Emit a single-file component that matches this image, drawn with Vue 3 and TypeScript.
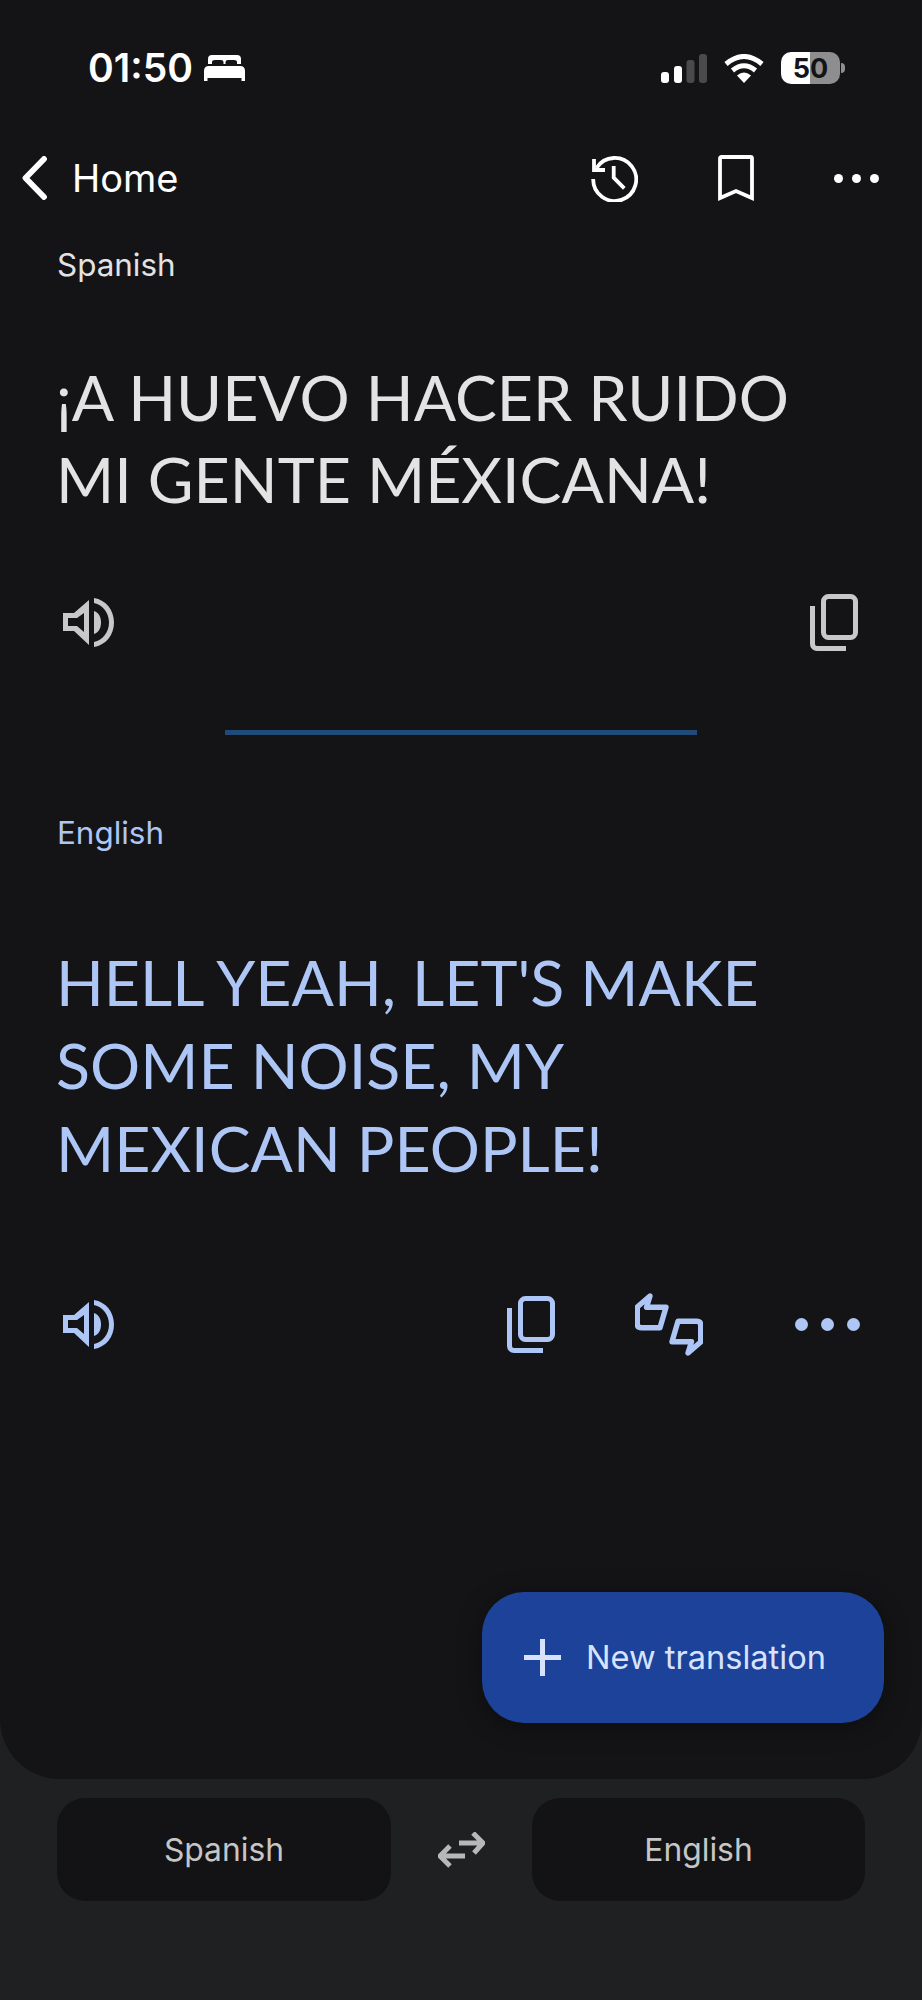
<script setup lang="ts">
const sourceLines: string[] = ['¡A HUEVO HACER RUIDO', 'MI GENTE MÉXICANA!']
const targetLines: string[] = ["HELL YEAH, LET'S MAKE", 'SOME NOISE, MY', 'MEXICAN PEOPLE!']
const signalBars = [
  { x: 0, y: 18, h: 11, fill: '#ffffff' },
  { x: 13, y: 12, h: 17, fill: '#ffffff' },
  { x: 25.5, y: 6, h: 23, fill: '#4a4a4c' },
  { x: 38, y: 0, h: 29, fill: '#4a4a4c' },
]
</script>

<template>
  <div class="page">
    <main class="panel">
      <div class="status">
        <div class="status-left">
          <span class="time">01:50</span>
          <svg class="bed" viewBox="0 0 41 28" width="41" height="28" fill="#fff">
            <path d="M4 10V5Q4 1 8 1H33Q37 1 37 5V10H33V8Q33 6 30 6H24Q21.5 6 21.5 8V10H19.5V8Q19.5 6 17 6H11Q8 6 8 8V10Z" />
            <path d="M0 17Q0 12 5 12H36Q41 12 41 17V27H37.500V24H3.500V27H0Z" />
          </svg>
        </div>
        <div class="status-right">
          <svg viewBox="0 0 46 29" width="46" height="29">
            <rect v-for="b in signalBars" :key="b.x" :x="b.x" :y="b.y" width="8" :height="b.h" rx="3" :fill="b.fill" />
          </svg>
          <svg viewBox="0 0 40 29" width="40" height="29" fill="none" stroke="#fff" stroke-width="5">
            <path d="M2 10Q20 -5 38 10" />
            <path d="M8.500 16.500Q20 7 31.500 16.500" />
            <path d="M20 29L13 21.500Q20 15.500 27 21.500Z" fill="#fff" stroke="none" />
          </svg>
          <div class="battery"><span>50</span></div>
        </div>
      </div>

      <nav class="nav">
        <div class="nav-left">
          <svg viewBox="0 0 25 44" width="25" height="44" fill="none" stroke="#fff" stroke-width="5.800" stroke-linecap="round" stroke-linejoin="round">
            <path d="M22 3L3.500 22L22 41" />
          </svg>
          <span class="home">Home</span>
        </div>
        <div class="nav-right">
          <svg viewBox="0 0 47 47" width="47" height="47" fill="none" stroke="#fff" stroke-width="3.800">
            <path d="M5.500 13A21.500 21.500 0 1 1 2.200 24" />
            <path d="M3 4V15H14" />
            <path d="M22.700 11V22.700L33.300 33.300" />
          </svg>
          <svg viewBox="0 0 36 46" width="36" height="46" fill="none" stroke="#fff" stroke-width="3.800">
            <path d="M2 43V3.500Q2 2 3.500 2H32.500Q34 2 34 3.500V43L18 36Z" />
          </svg>
          <svg class="nav-dots" viewBox="0 0 45 9" width="45" height="9" fill="#fff">
            <circle cx="4.500" cy="4.500" r="4.500" /><circle cx="22.500" cy="4.500" r="4.500" /><circle cx="40.500" cy="4.500" r="4.500" />
          </svg>
        </div>
      </nav>

      <section class="source">
        <div class="label">Spanish</div>
        <div class="text text-source">
          <div v-for="l in sourceLines" :key="l">{{ l }}</div>
        </div>
        <div class="actions actions-source">
          <svg class="icon-speaker" viewBox="0 0 51 51" width="51" height="51" fill="#c8c8c8">
            <path fill-rule="evenodd" d="M0 16H11L26 3V48L11 34H0ZM5 21V29H14L21 35V16L14 21Z" />
            <path d="M31 14C36 16 38 20 38 25.500C38 31 36 35 31 37Z" />
            <path d="M31 1C43 3 51 13 51 25.500C51 38 43 48 31 50V45C40 43 46 35 46 25.500C46 16 40 8 31 6Z" />
          </svg>
          <svg viewBox="0 0 48 57" width="48" height="57" fill="none" stroke="#c8c8c8" stroke-width="5">
            <rect x="13.500" y="2.500" width="32" height="41" rx="5" />
            <path d="M2.500 12V50A4.500 4.500 0 0 0 7 54.500H36" />
          </svg>
        </div>
      </section>

      <div class="divider"></div>

      <section class="target">
        <div class="label label-target">English</div>
        <div class="text text-target">
          <div v-for="l in targetLines" :key="l">{{ l }}</div>
        </div>
        <div class="actions actions-target">
          <svg class="icon-speaker" viewBox="0 0 51 51" width="51" height="51" fill="#aec6f6">
            <path fill-rule="evenodd" d="M0 16H11L26 3V48L11 34H0ZM5 21V29H14L21 35V16L14 21Z" />
            <path d="M31 14C36 16 38 20 38 25.500C38 31 36 35 31 37Z" />
            <path d="M31 1C43 3 51 13 51 25.500C51 38 43 48 31 50V45C40 43 46 35 46 25.500C46 16 40 8 31 6Z" />
          </svg>
          <div class="target-tools">
            <svg viewBox="0 0 48 57" width="48" height="57" fill="none" stroke="#aec6f6" stroke-width="5">
              <rect x="13.500" y="2.500" width="32" height="41" rx="5" />
              <path d="M2.500 12V50A4.500 4.500 0 0 0 7 54.500H36" />
            </svg>
            <svg viewBox="0 0 68 67" width="68" height="67" fill="none" stroke="#aec6f6" stroke-width="5.400" stroke-linejoin="round">
              <path d="M15 5L11.500 16.300H31L25 36.700H6.700Q2.300 36.700 2.300 33V16Z" />
              <path d="M15 5L11.500 16.300H31L25 36.700H6.700Q2.300 36.700 2.300 33V16Z" transform="rotate(180 34 33.500)" />
            </svg>
            <svg class="dots-blue" viewBox="0 0 65 13" width="65" height="13" fill="#aec6f6">
              <circle cx="6.500" cy="6.500" r="6.500" /><circle cx="32.500" cy="6.500" r="6.500" /><circle cx="58.500" cy="6.500" r="6.500" />
            </svg>
          </div>
        </div>
      </section>

      <button class="fab">
        <svg viewBox="0 0 37 37" width="37" height="37" fill="#d8e2ff">
          <rect x="16" y="0" width="5" height="37" /><rect x="0" y="16" width="37" height="5" />
        </svg>
        <span class="fab-label">New translation</span>
      </button>
    </main>

    <footer class="langs">
      <div class="pill">Spanish</div>
      <svg viewBox="0 0 47 36" width="47" height="36" fill="none" stroke="#b8b8b8" stroke-width="5">
        <path d="M21 11H45M35 1L45 11L36 21" />
        <path d="M27 24H2M12 14L2 24L12 34" />
      </svg>
      <div class="pill pill-right">English</div>
    </footer>
  </div>
</template>

<style scoped>
.page {
  width: 922px;
  height: 2000px;
  background: #1f2022;
  font-family: Inter, "Liberation Sans", sans-serif;
  overflow: hidden;
}
.panel {
  position: relative;
  height: 1779px;
  background: #141416;
  border-radius: 0 0 60px 60px;
  padding-top: 52px;
  box-sizing: border-box;
}
.status {
  display: flex;
  justify-content: space-between;
  align-items: center;
  height: 32px;
  padding: 0 77px 0 88px;
}
.status-left {
  display: flex;
  align-items: center;
  gap: 11px;
}
.time {
  color: #fff;
  font-size: 39px;
  font-weight: 600;
  line-height: 32px;
}
.status-right {
  display: flex;
  align-items: center;
  gap: 17px;
  margin-right: 5px;
}
.battery {
  position: relative;
  width: 59px;
  height: 32px;
  border-radius: 10px;
  background: linear-gradient(90deg, #fff 50%, #8e8e8e 50%);
  display: flex;
  align-items: center;
  justify-content: center;
  color: #141416;
  font-size: 27px;
  font-weight: 700;
}
.battery::after {
  content: "";
  position: absolute;
  left: 60px;
  top: 11px;
  width: 4px;
  height: 10px;
  border-radius: 0 4px 4px 0;
  background: #8e8e8e;
}
.nav {
  display: flex;
  justify-content: space-between;
  align-items: center;
  height: 48px;
  margin-top: 70px;
  padding: 0 44px 0 22px;
}
.nav-left {
  display: flex;
  align-items: center;
  gap: 25px;
}
.home {
  color: #fff;
  font-size: 38px;
  line-height: 48px;
}
.nav-right {
  display: flex;
  align-items: center;
  gap: 80px;
}
.nav-dots {
  margin-right: -1px;
}
.source {
  padding-top: 43px;
}
.label {
  padding-left: 57px;
  color: #e3e3e3;
  font-size: 31.400px;
  line-height: 40px;
}
.label-target {
  color: #aec6f6;
}
.text {
  padding-left: 56px;
  font-family: Lato, Inter, sans-serif;
  font-size: 62.700px;
  line-height: 82px;
}
.text-source {
  margin-top: 71px;
  color: #e3e3e3;
}
.text-target {
  margin-top: 87px;
  color: #aec6f6;
  line-height: 83px;
}
.actions {
  display: flex;
  justify-content: space-between;
  align-items: center;
  height: 60px;
  padding-left: 63px;
}
.actions-source {
  margin-top: 72px;
  padding-right: 64px;
}
.actions-target {
  margin-top: 105px;
  padding-right: 62px;
}
.target-tools {
  display: flex;
  align-items: center;
  gap: 80px;
}
.dots-blue {
  margin-left: 12px;
}
.divider {
  width: 472px;
  height: 5px;
  margin: 78px 0 0 225px;
  background: #204a78;
}
.target {
  padding-top: 78px;
}
.fab {
  position: absolute;
  left: 482px;
  top: 1592px;
  width: 402px;
  height: 131px;
  border: 0;
  border-radius: 42px;
  background: #1c4299;
  box-shadow: 0 4px 24px rgba(0, 0, 0, 0.35);
  color: #d8e2ff;
  display: flex;
  align-items: center;
  gap: 25px;
  padding: 0 0 0 42px;
  box-sizing: border-box;
  font-family: inherit;
  font-size: 32.600px;
}
.fab-label {
  margin-top: -2px;
}
.langs {
  display: flex;
  justify-content: space-between;
  align-items: center;
  margin-top: 19px;
  padding: 0 57px;
}
.pill {
  width: 334px;
  height: 103px;
  border-radius: 28px;
  background: #131315;
  color: #c6c6c6;
  display: flex;
  align-items: center;
  justify-content: center;
  font-size: 31.800px;
}
.pill-right {
  width: 333px;
}
</style>
